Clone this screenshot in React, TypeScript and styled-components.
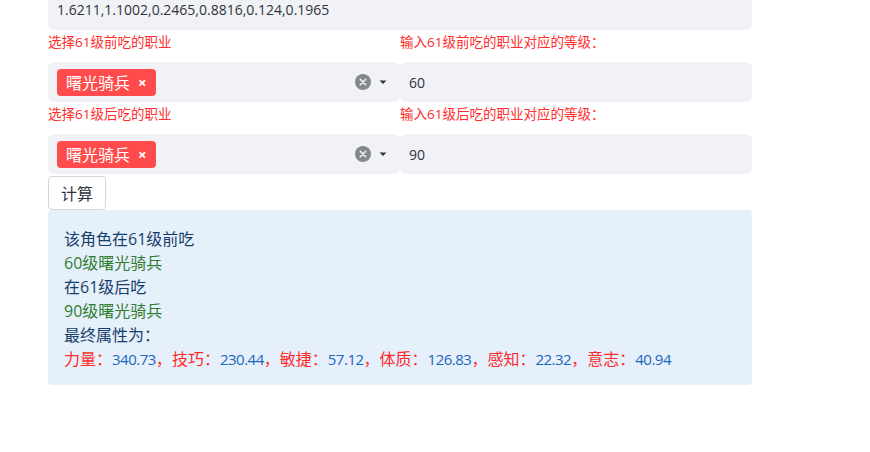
import React from 'react';
import styled, { createGlobalStyle } from 'styled-components';

const GlobalStyle = createGlobalStyle`
  html, body {
    margin: 0;
    padding: 0;
    background: #ffffff;
    overflow: hidden;
  }
  body {
    font-family: "Open Sans", "Noto Sans CJK SC", sans-serif;
    color: #31333f;
  }
`;

const Page = styled.div`
  width: 704px;
  margin: -11px 0 0 48px;
  display: flex;
  flex-direction: column;
`;

const TextInput = styled.div`
  height: 41px;
  background: #f0f2f6;
  border-radius: 6px;
  display: flex;
  align-items: center;
  padding: 0 9px;
  font-size: 14px;
  color: #31333f;
`;

const Columns = styled.div`
  display: grid;
  grid-template-columns: 352px 352px;
`;

const Field = styled.div`
  display: flex;
  flex-direction: column;
`;

const Label = styled.div`
  height: 20px;
  padding: 2px 0 10px;
  font-size: 13.5px;
  line-height: 20px;
  color: #ff2b2b;
`;

const Box = styled.div`
  height: 40px;
  background: #f0f2f6;
  border-radius: 6px;
  display: flex;
  align-items: center;
  padding: 0 9px;
  font-size: 14px;
  color: #31333f;
`;

const Tag = styled.div`
  height: 27px;
  background: #ff4b4b;
  color: #ffffff;
  border-radius: 4px;
  display: flex;
  align-items: center;
  gap: 8px;
  padding: 0 9px 0 9px;
  font-size: 16px;
`;

const TagClose = styled.span`
  font-size: 15px;
  font-weight: 700;
`;

const Spacer = styled.div`
  flex: 1;
`;

const Controls = styled.div`
  display: flex;
  align-items: center;
  gap: 7px;
  margin-right: 3px;
`;

const Button = styled.button`
  align-self: flex-start;
  margin-top: 2px;
  height: 34px;
  padding: 0 12px;
  background: #ffffff;
  border: 1px solid #d6d6d9;
  border-radius: 4px;
  font-family: inherit;
  font-size: 16px;
  color: #31333f;
`;

const Result = styled.div`
  background: #e6f0fb;
  border-radius: 4px;
  padding: 17px 16px 14px;
  font-size: 16px;
  line-height: 24px;
  color: #173e6b;
`;

const Line = styled.div<{ $color?: string }>`
  color: ${p => p.$color ?? 'inherit'};
`;

const Key = styled.span`
  color: #ff2b2b;
`;

const Val = styled.span`
  color: #1c66bd;
  font-size: 15px;
  letter-spacing: -0.5px;
`;

const ClearIcon = () => (
  <svg width="16" height="16" viewBox="0 0 16 16">
    <circle cx="8" cy="8" r="8" fill="#85878f" />
    <path d="M5.3 5.3 L10.7 10.7 M10.7 5.3 L5.3 10.7" stroke="#f0f2f6" strokeWidth="1.6" strokeLinecap="round" />
  </svg>
);

const Caret = () => (
  <svg width="10" height="10" viewBox="0 0 10 10">
    <path d="M1.5 3.5 L8.5 3.5 L5 7 Z" fill="#31333f" />
  </svg>
);

const Select: React.FC<{ value: string }> = ({ value }) => (
  <Box>
    <Tag>
      {value}
      <TagClose>×</TagClose>
    </Tag>
    <Spacer />
    <Controls>
      <ClearIcon />
      <Caret />
    </Controls>
  </Box>
);

const stats = [
  ['力量', '340.73'],
  ['技巧', '230.44'],
  ['敏捷', '57.12'],
  ['体质', '126.83'],
  ['感知', '22.32'],
  ['意志', '40.94'],
];

const App: React.FC = () => (
  <>
    <GlobalStyle />
    <Page>
      <TextInput>1.6211,1.1002,0.2465,0.8816,0.124,0.1965</TextInput>
      <Columns>
        <Field>
          <Label>选择61级前吃的职业</Label>
          <Select value="曙光骑兵" />
        </Field>
        <Field>
          <Label>输入61级前吃的职业对应的等级：</Label>
          <Box>60</Box>
        </Field>
      </Columns>
      <Columns>
        <Field>
          <Label>选择61级后吃的职业</Label>
          <Select value="曙光骑兵" />
        </Field>
        <Field>
          <Label>输入61级后吃的职业对应的等级：</Label>
          <Box>90</Box>
        </Field>
      </Columns>
      <Button>计算</Button>
      <Result>
        <Line>该角色在61级前吃</Line>
        <Line $color="#2e7d32">60级曙光骑兵</Line>
        <Line>在61级后吃</Line>
        <Line $color="#2e7d32">90级曙光骑兵</Line>
        <Line>最终属性为：</Line>
        <Line>
          {stats.map(([k, v], i) => (
            <React.Fragment key={k}>
              <Key>{k}：</Key>
              <Val>{v}</Val>
              {i < stats.length - 1 && <Key>，</Key>}
            </React.Fragment>
          ))}
        </Line>
      </Result>
    </Page>
  </>
);

export default App;
